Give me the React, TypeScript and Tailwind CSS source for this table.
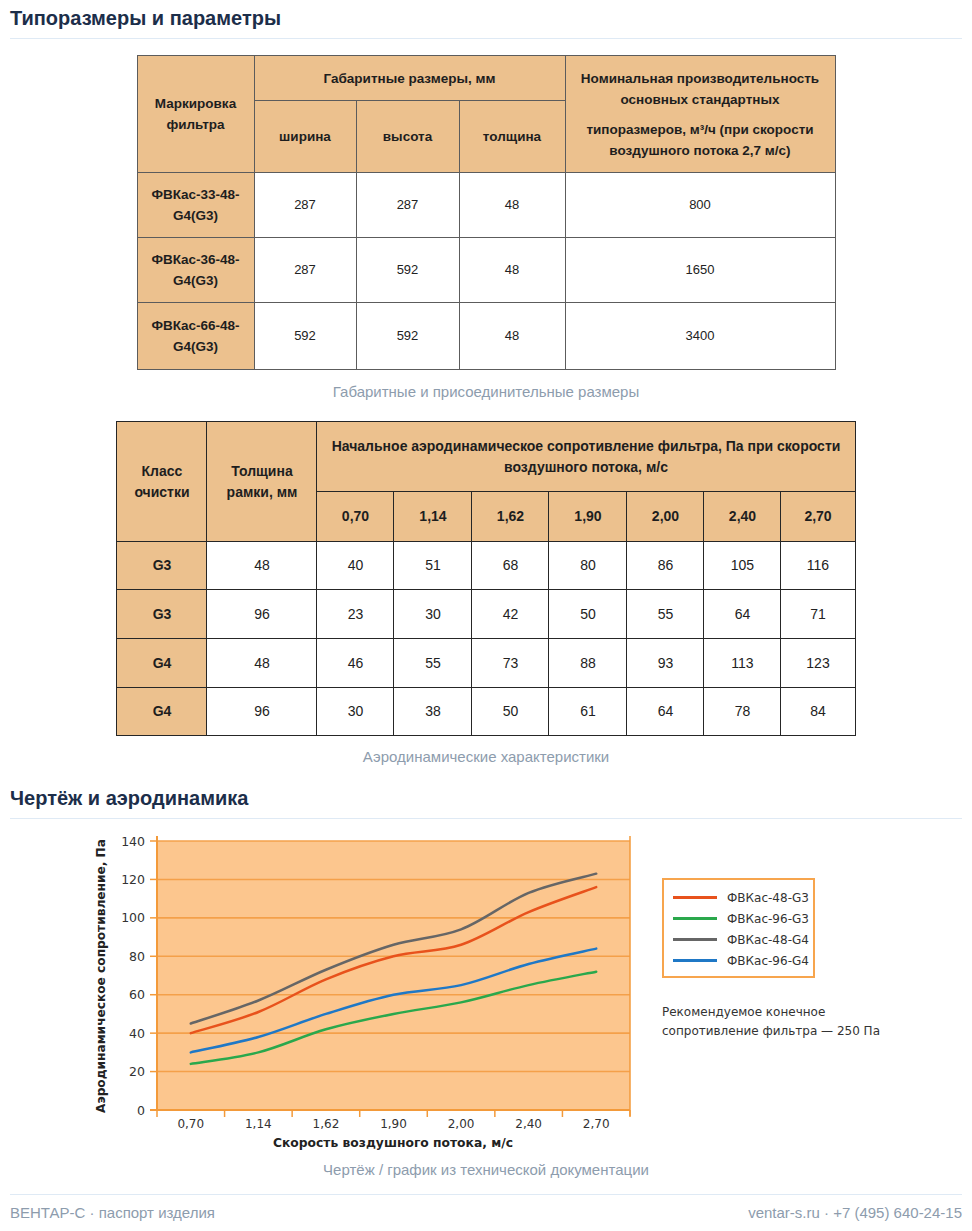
import type { ReactNode } from 'react';

const th = 'border border-[#5c5c5c] bg-[#ecc18e] text-center align-middle font-bold text-[13.5px] leading-[21px] text-[#1e1e1e]';
const td = 'border border-[#5c5c5c] bg-white text-center align-middle text-[13px] leading-[20px] text-[#222]';
const th2 = 'border border-[#262626] bg-[#ecc18e] text-center align-middle font-bold text-[14px] leading-[21px] text-[#1e1e1e]';
const td2 = 'border border-[#262626] bg-white text-center align-middle text-[14px] text-[#222]';

const sizes = [
  { name: 'ФВКас-33-48-', w: 287, h: 287, t: 48, q: 800 },
  { name: 'ФВКас-36-48-', w: 287, h: 592, t: 48, q: 1650 },
  { name: 'ФВКас-66-48-', w: 592, h: 592, t: 48, q: 3400 }
];

const speeds = ['0,70', '1,14', '1,62', '1,90', '2,00', '2,40', '2,70'];

const aero = [
  { cls: 'G3', frame: 48, vals: [40, 51, 68, 80, 86, 105, 116] },
  { cls: 'G3', frame: 96, vals: [23, 30, 42, 50, 55, 64, 71] },
  { cls: 'G4', frame: 48, vals: [46, 55, 73, 88, 93, 113, 123] },
  { cls: 'G4', frame: 96, vals: [30, 38, 50, 61, 64, 78, 84] }
];

const series = [
  { label: 'ФВКас-48-G3', color: '#e8521c', vals: [40, 51, 68, 80, 86, 103, 116] },
  { label: 'ФВКас-96-G3', color: '#2aa84c', vals: [24, 30, 42, 50, 56, 65, 72] },
  { label: 'ФВКас-48-G4', color: '#666666', vals: [45, 57, 73, 86, 94, 113, 123] },
  { label: 'ФВКас-96-G4', color: '#1f78c6', vals: [30, 38, 50, 60, 65, 76, 84] }
];

function Heading({ children }: { children: ReactNode }) {
  return (
    <h2 className="border-b border-[#dfeaf5] pt-[6px] pb-[8px] text-[20px] font-bold leading-[24px] text-[#1c2e4a]">
      {children}
    </h2>
  );
}

function Caption({ children, className = '' }: { children: ReactNode; className?: string }) {
  return <p className={`text-center text-[15px] leading-[20px] text-[#8d9cad] ${className}`}>{children}</p>;
}

// plot geometry, svg-local px
const PX0 = 72;
const PX1 = 545;
const PY0 = 14;
const PY1 = 283;
const CW = (PX1 - PX0) / 7;
const yOf = (v: number) => PY1 - (v / 140) * (PY1 - PY0);
const xOf = (i: number) => PX0 + (i + 0.5) * CW;

function smoothPath(vals: number[]) {
  const pts = vals.map((v, i) => [xOf(i), yOf(v)]);
  let d = `M${pts[0][0]},${pts[0][1]}`;
  for (let i = 0; i < pts.length - 1; i++) {
    const p0 = pts[i - 1] || pts[i];
    const p1 = pts[i];
    const p2 = pts[i + 1];
    const p3 = pts[i + 2] || p2;
    const c1x = p1[0] + (p2[0] - p0[0]) / 6;
    const c1y = p1[1] + (p2[1] - p0[1]) / 6;
    const c2x = p2[0] - (p3[0] - p1[0]) / 6;
    const c2y = p2[1] - (p3[1] - p1[1]) / 6;
    d += ` C${c1x},${c1y} ${c2x},${c2y} ${p2[0]},${p2[1]}`;
  }
  return d;
}

function Chart() {
  const grid = [20, 40, 60, 80, 100, 120, 140];
  const font = '"DejaVu Sans", Verdana, sans-serif';
  return (
    <svg width={560} height={324} className="shrink-0">
      <rect x={PX0} y={PY0} width={PX1 - PX0} height={PY1 - PY0} fill="#fcc68e" />
      {grid.map((g) => (
        <line key={g} x1={PX0} x2={PX1} y1={yOf(g)} y2={yOf(g)} stroke="#f4a04a" strokeWidth={1.6} />
      ))}
      <line x1={PX0} x2={PX0} y1={PY0 - 5} y2={PY1} stroke="#f39a3a" strokeWidth={2} />
      <line x1={PX1} x2={PX1} y1={PY0 - 5} y2={PY1 + 6} stroke="#f39a3a" strokeWidth={1.5} />
      <line x1={PX0 - 7} x2={PX1} y1={PY1} y2={PY1} stroke="#f39a3a" strokeWidth={2} />
      {[0, ...grid].map((g) => (
        <line key={g} x1={PX0 - 7} x2={PX0} y1={yOf(g)} y2={yOf(g)} stroke="#f39a3a" strokeWidth={1.5} />
      ))}
      {Array.from({ length: 8 }).map((_, k) => (
        <line key={k} x1={PX0 + k * CW} x2={PX0 + k * CW} y1={PY1} y2={PY1 + 7} stroke="#f39a3a" strokeWidth={1.5} />
      ))}
      {series.map((s) => (
        <path key={s.label} d={smoothPath(s.vals)} fill="none" stroke={s.color} strokeWidth={2.5} strokeLinecap="round" />
      ))}
      {[0, ...grid].map((g) => (
        <text key={g} x={60} y={yOf(g)} textAnchor="end" dominantBaseline="central" fontFamily={font} fontSize={12.5} fill="#333">
          {g}
        </text>
      ))}
      {speeds.map((s, i) => (
        <text key={s} x={xOf(i)} y={297} textAnchor="middle" dominantBaseline="central" fontFamily={font} fontSize={12} fill="#333">
          {s}
        </text>
      ))}
      <text
        x={308}
        y={315}
        textAnchor="middle"
        dominantBaseline="central"
        fontFamily={font}
        fontWeight="bold"
        fontSize={12.5}
        fill="#222"
        textLength={240}
        lengthAdjust="spacingAndGlyphs"
      >
        Скорость воздушного потока, м/с
      </text>
      <text
        transform="translate(15,149) rotate(-90)"
        textAnchor="middle"
        dominantBaseline="central"
        fontFamily={font}
        fontWeight="bold"
        fontSize={12.5}
        fill="#222"
        textLength={274}
        lengthAdjust="spacingAndGlyphs"
      >
        Аэродинамическое сопротивление, Па
      </text>
    </svg>
  );
}

export default function App() {
  return (
    <div className="min-h-[1231px] bg-white px-[10px] font-['Liberation_Sans',Arial,sans-serif]">
      <Heading>Типоразмеры и параметры</Heading>

      <table className="mx-auto mt-[16px] w-[698px] table-fixed border-collapse">
        <colgroup>
          <col className="w-[117px]" />
          <col className="w-[102px]" />
          <col className="w-[103px]" />
          <col className="w-[106px]" />
          <col className="w-[270px]" />
        </colgroup>
        <thead>
          <tr className="h-[45px]">
            <th rowSpan={2} className={th}>
              Маркировка
              <br />
              фильтра
            </th>
            <th colSpan={3} className={th}>
              Габаритные размеры, мм
            </th>
            <th rowSpan={2} className={`${th} px-2`}>
              <p>
                Номинальная производительность
                <br />
                основных стандартных
              </p>
              <p className="mt-[9px]">
                типоразмеров, м³/ч (при скорости
                <br />
                воздушного потока 2,7 м/с)
              </p>
            </th>
          </tr>
          <tr className="h-[72px]">
            <th className={th}>ширина</th>
            <th className={th}>высота</th>
            <th className={th}>толщина</th>
          </tr>
        </thead>
        <tbody>
          {sizes.map((r, i) => (
            <tr key={r.name} className={i === 2 ? 'h-[67px]' : 'h-[65px]'}>
              <td className={`${th} leading-[20px]`}>
                {r.name}
                <br />
                G4(G3)
              </td>
              <td className={td}>{r.w}</td>
              <td className={td}>{r.h}</td>
              <td className={td}>{r.t}</td>
              <td className={td}>{r.q}</td>
            </tr>
          ))}
        </tbody>
      </table>
      <Caption className="mt-[12px]">Габаритные и присоединительные размеры</Caption>

      <table className="mx-auto mt-[19px] w-[738px] table-fixed border-collapse">
        <colgroup>
          <col className="w-[90px]" />
          <col className="w-[110px]" />
          <col className="w-[77px]" />
          <col className="w-[78px]" />
          <col className="w-[77px]" />
          <col className="w-[78px]" />
          <col className="w-[77px]" />
          <col className="w-[77px]" />
          <col className="w-[74px]" />
        </colgroup>
        <thead>
          <tr className="h-[70px]">
            <th rowSpan={2} className={th2}>
              Класс
              <br />
              очистки
            </th>
            <th rowSpan={2} className={th2}>
              Толщина
              <br />
              рамки, мм
            </th>
            <th colSpan={7} className={`${th2} px-2`}>
              Начальное аэродинамическое сопротивление фильтра, Па при скорости
              <br />
              воздушного потока, м/с
            </th>
          </tr>
          <tr className="h-[50px]">
            {speeds.map((s) => (
              <th key={s} className={th2}>
                {s}
              </th>
            ))}
          </tr>
        </thead>
        <tbody>
          {aero.map((r, i) => (
            <tr key={i} className={i === 0 || i === 3 ? 'h-[48px]' : 'h-[49px]'}>
              <td className={th2}>{r.cls}</td>
              <td className={td2}>{r.frame}</td>
              {r.vals.map((v, j) => (
                <td key={j} className={td2}>
                  {v}
                </td>
              ))}
            </tr>
          ))}
        </tbody>
      </table>
      <Caption className="mt-[11px]">Аэродинамические характеристики</Caption>

      <div className="mt-[13px]">
        <Heading>Чертёж и аэродинамика</Heading>
      </div>

      <div className="mt-[8px] flex pl-[75px] font-['DejaVu_Sans',Verdana,sans-serif] text-[12px] text-[#333]">
        <Chart />
        <div className="ml-[17px] mt-[51px]">
          <div className="w-[153px] border-2 border-[#f7a54d] pt-[7px] pb-[5px] pl-[9px]">
            {series.map((s) => (
              <div key={s.label} className="flex h-[21px] items-center gap-[10px]">
                <span className="h-[3px] w-[44px]" style={{ background: s.color }} />
                <span className="leading-none">{s.label}</span>
              </div>
            ))}
          </div>
          <p className="mt-[25px] leading-[19px]">
            Рекомендуемое конечное
            <br />
            сопротивление фильтра — 250 Па
          </p>
        </div>
      </div>
      <Caption className="mt-[9px]">Чертёж / график из технической документации</Caption>

      <footer className="mt-[14px] flex justify-between border-t border-[#dfeaf5] pt-[8px] text-[15px] leading-[20px] text-[#8d9cad]">
        <span>ВЕНТАР-С · паспорт изделия</span>
        <span>ventar-s.ru · +7 (495) 640-24-15</span>
      </footer>
    </div>
  );
}
